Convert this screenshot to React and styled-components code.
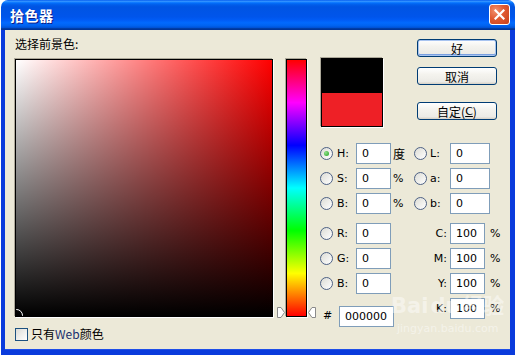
import React from 'react'
import styled, { createGlobalStyle } from 'styled-components'

const GlobalStyle = createGlobalStyle`
  html, body {
    margin: 0;
    padding: 0;
    background: #fff;
  }
  body {
    width: 515px;
    height: 355px;
    overflow: hidden;
    font-family: "DejaVu Sans", "Noto Sans CJK SC", sans-serif;
    font-size: 11px;
    color: #000;
  }
`

const cjk = `"Noto Sans CJK SC", "DejaVu Sans", sans-serif`

function App() {
  return (
    <>
      <GlobalStyle />
      <Window>
        <TitleBar>
          <Title>拾色器</Title>
          <CloseButton>
            <svg width="11" height="11" viewBox="0 0 11 11">
              <path d="M1.5 1.5 L9.5 9.5 M9.5 1.5 L1.5 9.5" stroke="#fff" strokeWidth="2.2" strokeLinecap="square" />
            </svg>
          </CloseButton>
        </TitleBar>

        <Body>
          <LeftPane>
            <Caption>选择前景色:</Caption>
            <PickerRow>
              <Field>
                <Cursor />
              </Field>
              <HueSlider>
                <Arrow $side="left">
                  <svg width="8" height="11" viewBox="0 0 8 11">
                    <path d="M0.5 0.5 L4 0.5 L7.5 5.5 L4 10.5 L0.5 10.5 Z" fill="#fff" stroke="#8a8a8a" />
                  </svg>
                </Arrow>
                <Arrow $side="right">
                  <svg width="8" height="11" viewBox="0 0 8 11">
                    <path d="M7.5 0.5 L4 0.5 L0.5 5.5 L4 10.5 L7.5 10.5 Z" fill="#fff" stroke="#8a8a8a" />
                  </svg>
                </Arrow>
              </HueSlider>
            </PickerRow>
            <CheckRow>
              <CheckBox />
              <CheckText>只有<WebWord>Web</WebWord>颜色</CheckText>
            </CheckRow>
          </LeftPane>

          <RightPane>
            <TopRow>
              <Swatch>
                <SwatchHalf $color="#000" />
                <SwatchHalf $color="#ee2026" />
              </Swatch>
              <ButtonCol>
                <Button $default>好</Button>
                <Button $gap={10}>取消</Button>
                <Button $gap={17}>自定(<u>C</u>)</Button>
              </ButtonCol>
            </TopRow>

            <FieldGrid $top={16}>
              <Radio $checked />
              <FieldLabel>H:</FieldLabel>
              <Input>0</Input>
              <Unit $cjk>度</Unit>
              <Radio />
              <FieldLabel $pad={2}>L:</FieldLabel>
              <Input>0</Input>
              <span />

              <Radio />
              <FieldLabel>S:</FieldLabel>
              <Input>0</Input>
              <Unit>%</Unit>
              <Radio />
              <FieldLabel $pad={2}>a:</FieldLabel>
              <Input>0</Input>
              <span />

              <Radio />
              <FieldLabel>B:</FieldLabel>
              <Input>0</Input>
              <Unit>%</Unit>
              <Radio />
              <FieldLabel $pad={2}>b:</FieldLabel>
              <Input>0</Input>
              <span />
            </FieldGrid>

            <FieldGrid $top={9}>
              <Radio />
              <FieldLabel>R:</FieldLabel>
              <Input>0</Input>
              <span />
              <RightLabel>C:</RightLabel>
              <Input $narrow>100</Input>
              <Unit $shift={-2}>%</Unit>

              <Radio />
              <FieldLabel>G:</FieldLabel>
              <Input>0</Input>
              <span />
              <RightLabel>M:</RightLabel>
              <Input $narrow>100</Input>
              <Unit $shift={-2}>%</Unit>

              <Radio />
              <FieldLabel>B:</FieldLabel>
              <Input>0</Input>
              <span />
              <RightLabel>Y:</RightLabel>
              <Input $narrow>100</Input>
              <Unit $shift={-2}>%</Unit>

              <Hash>#</Hash>
              <HexInput>000000</HexInput>
              <RightLabel>K:</RightLabel>
              <Input $narrow>100</Input>
              <Unit $shift={-2}>%</Unit>
            </FieldGrid>
          </RightPane>

          <Watermark>
            <WmLogo>Bai<WmDu>du</WmDu>经验</WmLogo>
            <WmUrl>jingyan.baidu.com</WmUrl>
          </Watermark>
        </Body>
      </Window>
    </>
  )
}

export default App

const Window = styled.div`
  margin-left: 1px;
  width: 514px;
  height: 355px;
  display: flex;
  flex-direction: column;
`

const TitleBar = styled.div`
  height: 30px;
  flex-shrink: 0;
  border-radius: 7px 7px 0 0;
  display: flex;
  align-items: center;
  justify-content: space-between;
  padding: 0 5px 0 9px;
  background: linear-gradient(
    to bottom,
    #0058ee 0%,
    #3593ff 4%,
    #288eff 6%,
    #127dff 8%,
    #036ffc 10%,
    #0262ee 14%,
    #0057e5 20%,
    #0054e3 24%,
    #0055eb 56%,
    #005bf5 66%,
    #026afe 76%,
    #0062ef 86%,
    #0052d6 92%,
    #0040ab 94%,
    #003092 100%
  );
`

const Title = styled.span`
  color: #fff;
  font-family: ${cjk};
  font-weight: bold;
  font-size: 14px;
  letter-spacing: 0.5px;
  text-shadow: 1px 1px 0 #0a1e8a;
  margin-top: -1px;
`

const CloseButton = styled.div`
  width: 21px;
  height: 21px;
  box-sizing: border-box;
  border: 1px solid #fff;
  border-radius: 3px;
  display: flex;
  align-items: center;
  justify-content: center;
  margin-top: -1px;
  background: radial-gradient(circle at 30% 30%, #f2926f 0%, #e05a32 45%, #c8401a 100%);
`

const Body = styled.div`
  position: relative;
  flex: 1;
  display: flex;
  padding: 6px 0 0 10px;
  background: #ece9d8;
  border-left: 4px solid #0a3bdc;
  border-right: 5px solid #0a3bdc;
  border-bottom: 5px solid #0a3bdc;
  box-shadow: inset 0 -1px 0 #1f4fe8;
`

const LeftPane = styled.div`
  width: 300px;
  display: flex;
  flex-direction: column;
`

const Caption = styled.div`
  font-family: ${cjk};
  font-size: 12px;
  line-height: 16px;
  height: 16px;
  margin-bottom: 7px;
`

const PickerRow = styled.div`
  display: flex;
  gap: 13px;
`

const Field = styled.div`
  position: relative;
  overflow: hidden;
  width: 258px;
  height: 258px;
  box-sizing: border-box;
  border: 1px solid #000;
  box-shadow: -1px -1px 0 #aca899, 1px 1px 0 #fff;
  background: linear-gradient(to top, #000, rgba(0, 0, 0, 0)),
    linear-gradient(to right, #fff, #f00);
`

const Cursor = styled.div`
  position: absolute;
  left: -6px;
  bottom: -6px;
  width: 11px;
  height: 11px;
  border: 1px solid #fff;
  border-radius: 50%;
`

const HueSlider = styled.div`
  position: relative;
  width: 21px;
  height: 258px;
  box-sizing: border-box;
  border: 1px solid #000;
  box-shadow: -1px -1px 0 #aca899, 1px 1px 0 #fff;
  background: linear-gradient(to bottom, #f00, #f0f, #00f, #0ff, #0f0, #ff0, #f00);
`

const Arrow = styled.div`
  position: absolute;
  bottom: -2px;
  ${(p) => (p.$side === 'left' ? 'left: -10px;' : 'right: -10px;')}
  width: 8px;
  height: 11px;
  display: flex;
`

const CheckRow = styled.div`
  display: flex;
  align-items: center;
  gap: 3px;
  margin-top: 10px;
`

const CheckBox = styled.div`
  width: 13px;
  height: 13px;
  box-sizing: border-box;
  border: 1px solid #1c5180;
  background: linear-gradient(135deg, #dcdcd7, #fff);
`

const CheckText = styled.span`
  font-family: ${cjk};
  font-size: 12px;
  line-height: 14px;
`

const WebWord = styled.span`
  color: #1a2f6e;
`

const RightPane = styled.div`
  margin-left: 5px;
  width: 189px;
  display: flex;
  flex-direction: column;
`

const TopRow = styled.div`
  display: flex;
  align-items: flex-start;
`

const Swatch = styled.div`
  margin: 22px 0 0 1px;
  width: 62px;
  height: 69px;
  box-sizing: border-box;
  border: 1px solid #000;
  box-shadow: 1px 1px 0 #fff, -1px -1px 0 #aca899;
  display: flex;
  flex-direction: column;
`

const SwatchHalf = styled.div`
  flex: 1;
  background: ${(p) => p.$color};
`

const ButtonCol = styled.div`
  margin: 3px 0 0 34px;
  display: flex;
  flex-direction: column;
`

const Button = styled.div`
  width: 80px;
  height: 18px;
  box-sizing: border-box;
  margin-top: ${(p) => p.$gap || 0}px;
  border: 1px solid #003c74;
  border-radius: 3px;
  display: flex;
  align-items: center;
  justify-content: center;
  font-family: ${cjk};
  font-size: 12px;
  background: linear-gradient(to bottom, #fff 0%, #f4f3ee 40%, #ecebe6 85%, #d6d0c5 100%);
  box-shadow: ${(p) => (p.$default ? 'inset 0 0 0 1px #a8c4f0, inset 0 -1px 0 1px #7aa0e0' : 'none')};

  u {
    font-family: "DejaVu Sans", sans-serif;
    font-size: 11px;
  }
`

const FieldGrid = styled.div`
  margin-top: ${(p) => p.$top}px;
  display: grid;
  grid-template-columns: 14px 22px 35px 23px 14px 22px 40px 1fr;
  grid-auto-rows: 21px;
  row-gap: 4px;
  align-items: center;
`

const Radio = styled.div`
  width: 13px;
  height: 13px;
  box-sizing: border-box;
  border: 1px solid #4d6185;
  border-radius: 50%;
  background: linear-gradient(135deg, #dcdcd5, #fff);
  display: flex;
  align-items: center;
  justify-content: center;

  &::after {
    content: "";
    width: 5px;
    height: 5px;
    border-radius: 50%;
    background: ${(p) => (p.$checked ? 'radial-gradient(circle at 35% 35%, #8fe08a, #21a121)' : 'transparent')};
  }
`

const FieldLabel = styled.span`
  padding-left: ${(p) => (p.$pad != null ? p.$pad : 3)}px;
  font-size: 11px;
`

const RightLabel = styled.span`
  grid-column: 5 / span 2;
  text-align: right;
  padding-right: 3px;
  font-size: 11px;
`

const Input = styled.div`
  width: ${(p) => (p.$narrow ? 35 : p.$wide || 'auto')}${(p) => (p.$narrow ? 'px' : '')};
  height: 21px;
  box-sizing: border-box;
  border: 1px solid #7f9db9;
  background: #fff;
  padding-left: 5px;
  display: flex;
  align-items: center;
  font-size: 11px;
`

const Unit = styled.span`
  padding-left: 2px;
  margin-left: ${(p) => p.$shift || 0}px;
  font-family: ${(p) => (p.$cjk ? cjk : 'inherit')};
  font-size: ${(p) => (p.$cjk ? 12 : 11)}px;
`

const Hash = styled.span`
  padding-left: 3px;
  align-self: start;
  margin-top: 11px;
  font-size: 11px;
`

const HexInput = styled(Input)`
  grid-column: 2 / span 3;
  width: 55px;
  margin-left: 5px;
  align-self: start;
  margin-top: 8px;
`

const Watermark = styled.div`
  position: absolute;
  left: 386px;
  top: 264px;
  display: flex;
  flex-direction: column;
  align-items: flex-start;
  color: #fff;
  opacity: 0.45;
  pointer-events: none;
`

const WmLogo = styled.span`
  font-family: "DejaVu Sans", "Noto Sans CJK SC", sans-serif;
  font-weight: bold;
  font-size: 21px;
  line-height: 24px;
`

const WmDu = styled.span`
  margin: 0 2px;
`

const WmUrl = styled.span`
  font-size: 11px;
  margin-top: 4px;
  margin-left: 6px;
`
